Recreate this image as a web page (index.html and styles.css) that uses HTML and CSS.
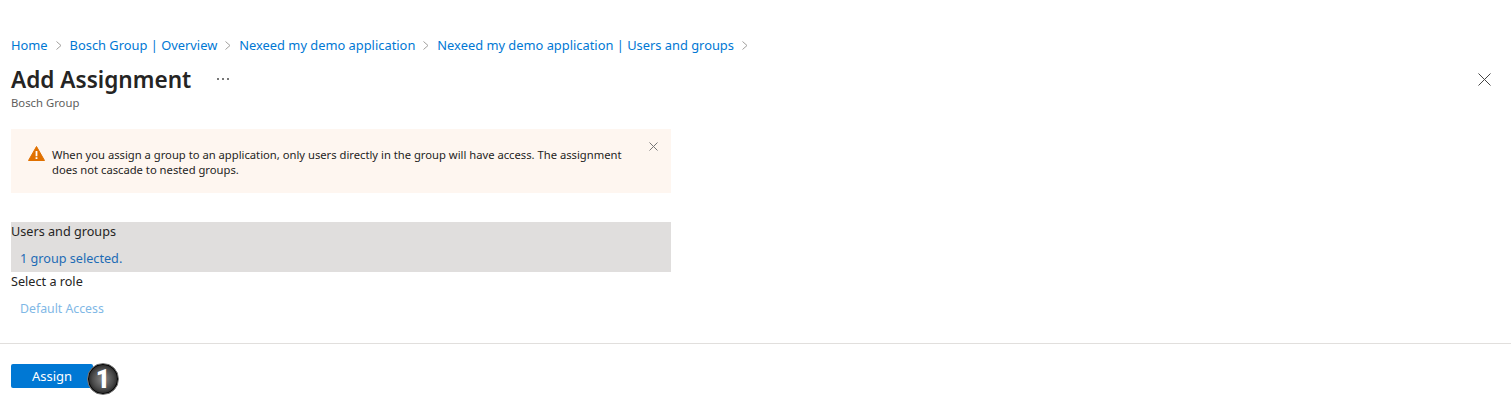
FILE: index.html
```html
<!DOCTYPE html>
<html lang="en">
<head>
<meta charset="utf-8">
<title>Add Assignment</title>
<link rel="stylesheet" href="styles.css">
</head>
<body>
<div class="content">
  <nav class="crumbs">
    <a class="crumb">Home</a>
    <svg class="chev" viewBox="0 0 6 9"><path d="M.5.5l4.5 4-4.500 4"/></svg>
    <a class="crumb">Bosch Group | Overview</a>
    <svg class="chev" viewBox="0 0 6 9"><path d="M.5.5l4.5 4-4.500 4"/></svg>
    <a class="crumb">Nexeed my demo application</a>
    <svg class="chev" viewBox="0 0 6 9"><path d="M.5.5l4.5 4-4.500 4"/></svg>
    <a class="crumb">Nexeed my demo application | Users and groups</a>
    <svg class="chev" viewBox="0 0 6 9"><path d="M.5.5l4.5 4-4.500 4"/></svg>
  </nav>
  <header class="head">
    <h1 class="title">Add Assignment</h1>
    <svg class="more" viewBox="0 0 12 2"><path d="M0 0h2v2H0zM5 0h2v2H5zM10 0h2v2h-2z"/></svg>
    <svg class="close" viewBox="0 0 13 13"><path d="M.5.5l12 12M12.5.5l-12 12"/></svg>
  </header>
  <div class="sub">Bosch Group</div>
  <div class="alert">
    <svg class="warn" viewBox="0 0 17 15"><path class="warn-bg" d="M8.5 .5 16.500 14.500H.5z"/><path class="warn-mark" d="M7.600 5h1.800v5.200H7.600zM7.600 11.200h1.800v1.800H7.600z"/></svg>
    <p class="alert-text">When you assign a group to an application, only users directly in the group will have access. The assignment does not cascade to nested groups.</p>
    <svg class="alert-x" viewBox="0 0 9 9"><path d="M.5.5l8 8M8.500.5l-8 8"/></svg>
  </div>
  <section class="selected">
    <div class="label">Users and groups</div>
    <a class="value">1 group selected.</a>
  </section>
  <section class="role">
    <div class="label">Select a role</div>
    <a class="value muted">Default Access</a>
  </section>
</div>
<footer class="foot">
  <div class="actions">
    <button class="assign">Assign</button>
    <span class="badge">1</span>
  </div>
</footer>
</body>
</html>
```
FILE: styles.css
```css
* { box-sizing: border-box; }
html, body { margin: 0; height: 100%; }
body {
  background: #fff;
  color: #252423;
  font-family: "Noto Sans", "Open Sans", "Liberation Sans", sans-serif;
  font-size: 13px;
  overflow: hidden;
}
.content { padding: 36px 11px 0; height: 343px; }
.crumbs { display: flex; align-items: center; height: 19px; }
.crumb { color: #0078d4; font-size: 12.86px; line-height: 19px; white-space: nowrap; }
.chev { width: 6px; height: 9px; margin: 0 8px; fill: none; stroke: #a19f9d; stroke-width: 1; }
.head { display: flex; align-items: center; height: 32px; margin-top: 8px; }
.title { margin: 0; padding-top: 1px; font-size: 22.6px; line-height: 31px; font-weight: 600; color: #252423; }
.more { width: 12px; height: 2px; margin-left: 26px; fill: #777; }
.close { width: 13px; height: 13px; margin-left: auto; margin-right: 9px; fill: none; stroke: #444; stroke-width: 1; }
.sub { font-size: 11.3px; line-height: 15px; color: #605e5c; }
.alert {
  display: flex; align-items: flex-start;
  width: 660px; height: 64px; margin-top: 19px; padding: 17px 0 0 17px;
  background: #fef6f0;
}
.warn { width: 17px; height: 15px; flex: none; margin-right: 7px; }
.warn-bg { fill: #e07000; stroke: #e07000; stroke-width: 1; stroke-linejoin: round; }
.warn-mark { fill: #fff; }
.alert-text { margin: 1px 0 0; width: 580px; font-size: 11.23px; line-height: 15px; color: #252423; }
.alert-x { width: 9px; height: 9px; flex: none; margin: -4px 0 0 16.5px; fill: none; stroke: #777; stroke-width: 1; }
.selected { width: 660px; height: 50px; margin-top: 29px; background: #e0dedd; }
.label { font-size: 12.65px; line-height: 19px; color: #252423; }
.value { display: block; margin: 8px 0 0 9px; font-size: 12.65px; line-height: 19px; color: #1e6cb5; }
.muted { color: #7fb8e6; font-size: 12.3px; }
.foot { height: 68px; border-top: 1px solid #e1dfdd; padding: 20px 11px 0; }
.actions { position: relative; width: 82px; }
.assign {
  display: block; width: 82px; height: 24px; padding: 0; border: 0; border-radius: 2px;
  background: #0078d4; color: #fff; font: inherit; font-size: 13px;
}
.badge {
  position: absolute; left: 76px; top: -1px;
  width: 32px; height: 32px; border-radius: 50%;
  display: flex; align-items: center; justify-content: center;
  background: radial-gradient(circle at 50% 50%, #8a8a8a 0%, #4a4a4a 50%, #0c0c0c 85%);
  border: 1px solid #777; box-shadow: inset 0 0 0 1px #000;
  color: #fff; font-family: Roboto, "Liberation Sans", sans-serif; font-weight: 900; font-size: 25px;
}
```
